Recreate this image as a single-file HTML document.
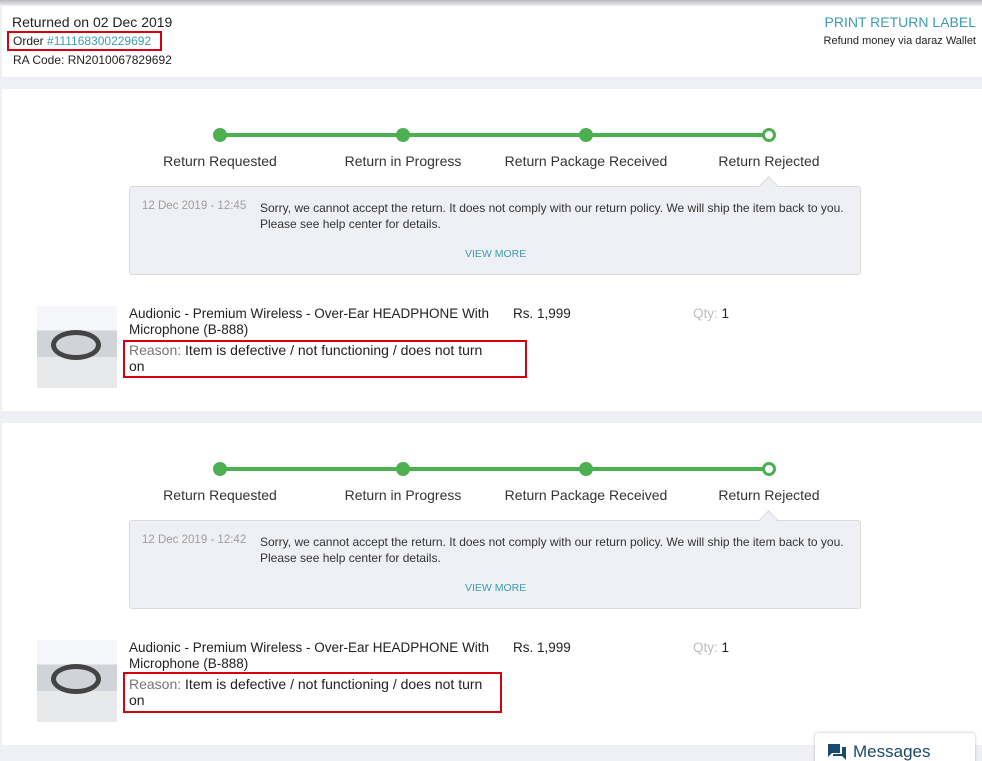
<html style="overflow:hidden"><head><style>
body{margin:0;width:982px;height:761px;background:#eff0f5;font-family:"Liberation Sans",sans-serif;position:relative;overflow:hidden;color:#212121}
.a{position:absolute;white-space:nowrap}
.hdr{position:absolute;left:2px;top:6px;width:980px;height:71px;background:#fff}
.top{position:absolute;left:0;top:0;width:982px;height:6px;background:linear-gradient(#b8b8bc,#eff0f5)}
.p{position:absolute;left:2px;width:980px;height:322px;background:#fff}
.line{position:absolute;left:218px;width:551px;height:4px;background:#4caf50;top:44px}
.dot{position:absolute;width:14px;height:14px;border-radius:50%;background:#4caf50;top:39px}
.ring{position:absolute;width:8px;height:8px;border-radius:50%;background:#fff;border:3px solid #4caf50;top:39px}
.lb{position:absolute;top:64px;font-size:14px;color:#333;transform:translateX(-50%);white-space:nowrap}
.box{position:absolute;left:127px;top:97px;width:730px;height:87px;background:#eff0f5;border:1px solid #dadada;border-radius:3px}
.arr{position:absolute;left:760px;top:90px;width:12px;height:12px;background:#eff0f5;border-left:1px solid #dadada;border-top:1px solid #dadada;transform:rotate(45deg)}
.img{position:absolute;left:35px;top:217px;width:80px;height:82px;background:linear-gradient(#f4f6f9 0 30%,#d0d3d7 30% 62%,#e8e9eb 62%);overflow:hidden}
.img i{position:absolute;left:14px;top:24px;width:50px;height:30px;border-radius:50%;border:5px solid #444;box-sizing:border-box}
.red{position:absolute;border:2px solid #d7000f}
.msg{left:258px;top:111px;font-size:12px;color:#333;line-height:16px}
</style></head><body>
<div class="top"></div>
<div class="hdr"></div>
<div class="a" style="left:12px;top:14px;font-size:14px">Returned on 02 Dec 2019</div>
<div class="a" style="left:13px;top:34px;font-size:12px">Order <span style="color:#3c9cb0">#111168300229692</span></div>
<div class="red" style="left:7px;top:31px;width:151px;height:16px"></div>
<div class="a" style="left:13px;top:53px;font-size:12px">RA Code: RN2010067829692</div>
<div class="a" style="right:6px;top:14px;font-size:14px;color:#3c9cb0">PRINT RETURN LABEL</div>
<div class="a" style="right:6px;top:35px;font-size:11px">Refund money via daraz Wallet</div>

<div class="p" style="top:89px">
<div class="line"></div>
<div class="dot" style="left:211px"></div><div class="dot" style="left:394px"></div><div class="dot" style="left:577px"></div><div class="ring" style="left:760px"></div>
<div class="lb" style="left:218px">Return Requested</div><div class="lb" style="left:401px">Return in Progress</div><div class="lb" style="left:584px">Return Package Received</div><div class="lb" style="left:767px">Return Rejected</div>
<div class="box"></div><div class="arr"></div>
<div class="a" style="left:140px;top:111px;font-size:11.5px;color:#9e9e9e">12 Dec 2019 - 12:45</div>
<div class="a msg">Sorry, we cannot accept the return. It does not comply with our return policy. We will ship the item back to you.<br>Please see help center for details.</div>
<div class="a" style="left:463px;top:159px;font-size:10.5px;color:#3c9cb0">VIEW MORE</div>
<div class="img"><i></i></div>
<div class="a" style="left:127px;top:217px;font-size:13.5px;line-height:16px">Audionic - Premium Wireless - Over-Ear HEADPHONE With<br>Microphone (B-888)</div>
<div class="a" style="left:127px;top:253px;font-size:14px;line-height:16px"><span style="color:#757575">Reason:</span> Item is defective / not functioning / does not turn<br>on</div>
<div class="red" style="left:121px;top:251px;width:400px;height:34px"></div>
<div class="a" style="left:511px;top:217px;font-size:13.5px">Rs. 1,999</div>
<div class="a" style="left:691px;top:217px;font-size:13.5px"><span style="color:#bdbdbd">Qty:</span> 1</div>
</div>

<div class="p" style="top:423px">
<div class="line"></div>
<div class="dot" style="left:211px"></div><div class="dot" style="left:394px"></div><div class="dot" style="left:577px"></div><div class="ring" style="left:760px"></div>
<div class="lb" style="left:218px">Return Requested</div><div class="lb" style="left:401px">Return in Progress</div><div class="lb" style="left:584px">Return Package Received</div><div class="lb" style="left:767px">Return Rejected</div>
<div class="box"></div><div class="arr"></div>
<div class="a" style="left:140px;top:111px;font-size:11.5px;color:#9e9e9e">12 Dec 2019 - 12:42</div>
<div class="a msg">Sorry, we cannot accept the return. It does not comply with our return policy. We will ship the item back to you.<br>Please see help center for details.</div>
<div class="a" style="left:463px;top:159px;font-size:10.5px;color:#3c9cb0">VIEW MORE</div>
<div class="img"><i></i></div>
<div class="a" style="left:127px;top:217px;font-size:13.5px;line-height:16px">Audionic - Premium Wireless - Over-Ear HEADPHONE With<br>Microphone (B-888)</div>
<div class="a" style="left:127px;top:253px;font-size:14px;line-height:16px"><span style="color:#757575">Reason:</span> Item is defective / not functioning / does not turn<br>on</div>
<div class="red" style="left:121px;top:249px;width:375px;height:37px"></div>
<div class="a" style="left:511px;top:217px;font-size:13.5px">Rs. 1,999</div>
<div class="a" style="left:691px;top:217px;font-size:13.5px"><span style="color:#bdbdbd">Qty:</span> 1</div>
</div>

<div style="position:absolute;left:815px;top:733px;width:160px;height:40px;background:#fff;border-radius:4px;box-shadow:0 0 3px rgba(0,0,0,.25)"></div>
<svg style="position:absolute;left:828px;top:744px" width="18" height="16" viewBox="0 0 18 16"><path d="M0 0h12v9H4l-4 4z" fill="#1a4a6b"/><path d="M14 3h4v13l-4-4H5v-2h9z" fill="#1a4a6b"/></svg>
<div class="a" style="left:853px;top:742px;font-size:17px;color:#1a4a6b">Messages</div>
</body></html>
